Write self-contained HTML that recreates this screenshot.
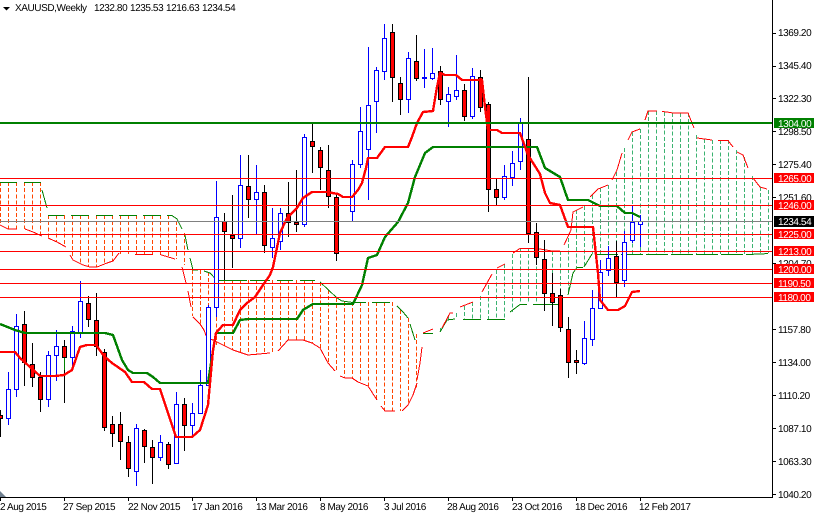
<!DOCTYPE html>
<html><head><meta charset="utf-8"><style>
html,body{margin:0;padding:0;background:#fff;width:814px;height:514px;overflow:hidden}
svg{display:block}
text{font-family:"Liberation Sans",sans-serif;font-size:10px;letter-spacing:-.42px}
</style></head><body>
<svg width="814" height="514" viewBox="0 0 814 514" xmlns="http://www.w3.org/2000/svg" shape-rendering="crispEdges">
<rect width="814" height="514" fill="#fff"/>
<!-- cloud verticals -->
<path fill="none" stroke="#FF4500" stroke-dasharray="4 2.200" d="M.5 182V225M8.5 182V229M16.5 182V229M24.5 182V229M32.5 182V232M40.5 182V236M48.5 215V238M56.5 215V242M64.5 215V246M72.5 215V258M80.5 215V264M88.5 215V267M96.5 215V267M104.5 215V264M112.5 215V261M120.5 215V254M128.5 215V254M136.5 215V254M144.5 215V254M152.5 215V254M160.5 215V254M168.5 215V257M176.5 221V259M184.5 233V265M192.5 270V316M200.5 270V324M208.5 272V340M216.5 280V345M224.5 280V347M232.5 280V350M240.5 280V353M248.5 280V355M256.5 280V355M264.5 280V354M272.5 280V352M280.5 280V349M288.5 280V340M296.5 280V340M304.5 280V340M312.5 280V343M320.5 282V348M328.5 290V363M336.5 298V372M344.5 302V378M352.5 302V378M360.5 302V383M368.5 302V386M376.5 302V399M384.5 302V411M392.5 302V411M400.5 310V411M408.5 318V405M416.5 334V388"/>
<path fill="none" stroke="#3CB371" stroke-dasharray="4 2.200" d="M440.5 328V332M448.5 316V320M456.5 313V319M464.5 306V319M472.5 302V319M480.5 296V319M488.5 285V319M496.5 270V319M504.5 264V319M512.5 254V312M520.5 248V304M528.5 248V304M536.5 248V304M544.5 249V304M552.5 251V304M560.5 251V304M568.5 238V292M576.5 210V267M584.5 206V267M592.5 195V254M600.5 188V254M608.5 185V254M616.5 172V254M624.5 148V254M632.5 132V254M640.5 129V254M648.5 111V254M656.5 111V254M664.5 112V254M672.5 113V254M680.5 113V254M688.5 113V254M696.5 135V254M704.5 139V254M712.5 140V254M720.5 140V254M728.5 140V254M736.5 150V254M744.5 157V254M752.5 176V254M760.5 187V254M768.5 190V253"/>
<!-- cloud edges -->
<path fill="none" stroke="#008000" d="M0 182.5H17M24 182.5H41M42 190L47 208M48 215.5H64M71 215.5H89M96 215.5H113M119 215.5H137M143 215.5H161M167 215.5H172L177 219L182 229M185 235L188 250M190 258L193 270H198M204 271L210 273L217 280.5H247M250 280.5H270M277 280.5H293M300 280.5H315M320 282L337 298L342 301L353 302.5H366M372 302.5H390M397 306L403 312L408 318M410 324L415 340M423 333.5H433M440 332L447 320L455 319M463 319.5H481M487 319.5H505M510 312L520 304.5H527M533 304.5H560M568 295L573 273L577 267.5H583M584 267L592 254"/>
<path fill="none" stroke="#008000" stroke-dasharray="22 3" d="M596 254.5H748L770 253.5"/>
<path fill="none" stroke="#FF0000" d="M0 225L8 229H17M25 229L33 232L42 236M48 238L57 242L66 247M70 255L73 260L83 265L90 267H97L107 263L113 261L119 253M135 254.5H153M160 254.5L175 259M182 267L186 283M188 291L191 307M193 317L200 324L204 330L207 338L213 340L233 350L248 355L270 353M278 351L288 340H303L312 343L320 348L328 363L335 371M340 376L345 378H352L358 382L368 386L377 400M381 406L385 411H395M402 411L408 405L413 395L417 383M417 380L420 363L422 347M423 333L433 329M442 328L450 313L453 313M460 307L473 302M482 292L492 274M497 268L505 264M513 253L520 248.5H537L552 251H560M564 245L571 230L573 212L583 207M590 197L598 189L608 185M612 180L617 170L622 153M628 140L632 132L640 129M645 120L648 111H657M662 111.5L667 112L673 113H688L694 128M697 138L712 140M718 140.5H728L733 147M737 152L743 155L748 168M753 178L760 187L767 189"/>
<!-- candles -->
<path fill="none" stroke="#0000FF" d="M8.5 372V425M16.5 314V397M48.5 351V407M56.5 330V381M72.5 326V367M80.5 281V338M136.5 424V486M160.5 435V461M176.5 392V463M192.5 403V435M200.5 370V413M208.5 305V385M216.5 181V317M240.5 155V248M256.5 165V234M272.5 208V258M280.5 208V250M304.5 134V227M352.5 160V222M360.5 107V168M368.5 47V200M376.5 67V133M384.5 24V80M408.5 52V113M424.5 49V88M432.5 48V80M448.5 87V127M456.5 55V100M472.5 68V119M504.5 165V200M512.5 151V186M520.5 118V170M584.5 321V365M592.5 290V346M600.5 260V308M608.5 246V276M624.5 231V287M632.5 205V243M640.5 215V247"/>
<path fill="#fff" stroke="#0000FF" d="M6.5 389.5h4V418.5h-4zM14.5 326.5h4V389.5h-4zM46.5 355.5h4V399.5h-4zM54.5 346.5h4V355.5h-4zM70.5 331.5h4V357.5h-4zM78.5 301.5h4V332.5h-4zM134.5 428.5h4V471.5h-4zM158.5 442.5h4V457.5h-4zM174.5 404.5h4V463.5h-4zM190.5 413.5h4V425.5h-4zM198.5 385.5h4V413.5h-4zM206.5 307.5h4V385.5h-4zM214.5 217.5h4V307.5h-4zM238.5 185.5h4V238.5h-4zM254.5 192.5h4V199.5h-4zM270.5 238.5h4V247.5h-4zM278.5 213.5h4V241.5h-4zM302.5 137.5h4V224.5h-4zM350.5 164.5h4V211.5h-4zM358.5 131.5h4V164.5h-4zM366.5 105.5h4V149.5h-4zM374.5 70.5h4V101.5h-4zM382.5 38.5h4V71.5h-4zM406.5 58.5h4V99.5h-4zM422.5 77.5h4V78.5h-4zM430.5 73.5h4V78.5h-4zM446.5 94.5h4V101.5h-4zM454.5 90.5h4V96.5h-4zM470.5 76.5h4V116.5h-4zM502.5 176.5h4V197.5h-4zM510.5 163.5h4V177.5h-4zM518.5 123.5h4V161.5h-4zM582.5 338.5h4V363.5h-4zM590.5 308.5h4V339.5h-4zM598.5 272.5h4V308.5h-4zM606.5 258.5h4V270.5h-4zM622.5 242.5h4V280.5h-4zM630.5 222.5h4V240.5h-4zM638.5 221.5h4V224.5h-4z"/>
<path fill="none" stroke="#000" d="M.5 410V437M24.5 311V386M32.5 343V387M40.5 372V412M64.5 340V403M88.5 296V327M96.5 293V356M104.5 349V431M112.5 416V447M120.5 412V460M128.5 436V477M144.5 429V463M152.5 440V484M168.5 442V469M184.5 398V451M224.5 213V280M232.5 195V268M248.5 155V218M264.5 185V253M288.5 182V237M296.5 170V232M312.5 124V173M320.5 147V190M328.5 145V208M336.5 193V261M392.5 24V102M400.5 77V115M416.5 35V81M440.5 66V105M464.5 84V121M480.5 70V112M488.5 102V212M496.5 179V205M528.5 77V243M536.5 223V265M544.5 240V311M552.5 273V326M560.5 289V332M568.5 317V378M576.5 350V374M616.5 241V297"/>
<path fill="#FF0000" stroke="#000" d="M-1.5 415.5h4V418.5h-4zM22.5 324.5h4V362.5h-4zM30.5 364.5h4V377.5h-4zM38.5 377.5h4V399.5h-4zM62.5 346.5h4V357.5h-4zM86.5 303.5h4V319.5h-4zM94.5 320.5h4V346.5h-4zM102.5 352.5h4V427.5h-4zM110.5 424.5h4V433.5h-4zM118.5 424.5h4V441.5h-4zM126.5 442.5h4V468.5h-4zM142.5 430.5h4V446.5h-4zM150.5 447.5h4V457.5h-4zM166.5 444.5h4V464.5h-4zM182.5 404.5h4V425.5h-4zM222.5 221.5h4V231.5h-4zM230.5 235.5h4V238.5h-4zM246.5 186.5h4V199.5h-4zM262.5 192.5h4V245.5h-4zM286.5 213.5h4V222.5h-4zM294.5 222.5h4V224.5h-4zM310.5 141.5h4V146.5h-4zM318.5 150.5h4V167.5h-4zM326.5 170.5h4V196.5h-4zM334.5 197.5h4V253.5h-4zM390.5 32.5h4V77.5h-4zM398.5 83.5h4V99.5h-4zM414.5 61.5h4V78.5h-4zM438.5 71.5h4V99.5h-4zM462.5 90.5h4V116.5h-4zM478.5 77.5h4V107.5h-4zM486.5 104.5h4V189.5h-4zM494.5 189.5h4V197.5h-4zM526.5 139.5h4V233.5h-4zM534.5 232.5h4V257.5h-4zM542.5 259.5h4V293.5h-4zM550.5 293.5h4V302.5h-4zM558.5 295.5h4V327.5h-4zM566.5 329.5h4V362.5h-4zM574.5 360.5h4V362.5h-4zM614.5 256.5h4V282.5h-4z"/>
<path stroke="#008000" d="M64.5 358V370"/>
<!-- kijun -->
<path fill="none" stroke="#008000" stroke-width="2.400" d="M0 324L15 330L25 333H105L113 335L122 360L128 370L133 373H147L153 377L160 383H208L212 357L216 333H233L240 320L248 319H297L303 310L313 304H353L362 285L368 258L377 255L385 237L398 222L408 203L415 177L425 153L433 147H537L545 168L560 177L568 200H588L600 206H617L625 213H632L640 217"/>
<!-- tenkan -->
<path fill="none" stroke="#FF0000" stroke-width="2.400" d="M0 352H15L20 358L40 376H55L64 375L72 370L80 347L87 345H96L104 356L112 363L125 372L132 382H144L152 389H160L176 437H192L200 430L208 405L213 350L216 333L223 325H233L240 310L247 303L255 297L263 285L270 275L273 267L280 233L287 218L297 208L303 198L312 192H327L338 194L343 197H352L358 190L362 183L366 168L368 158H377L385 147H408L412 137L417 123L423 112L433 111L437 87L440 73L445 75H456L462 80H482L485 107L488 130H497L502 133H520L528 155L540 174L545 193L550 203L560 205L568 227H593L596 255L598 273L600 300L608 310H618L625 306L632 292L640 291"/>
<!-- horizontal lines -->
<path stroke="#FF0000" d="M0 178.5H773M0 205.5H773M0 234.5H773M0 251.5H773M0 269.5H773M0 283.5H773M0 297.5H773"/>
<path stroke="#808080" d="M0 221.5H773"/>
<rect x="0" y="122" width="773" height="2" fill="#008000"/>
<!-- axes -->
<path stroke="#000" d="M772.5 0V498M0 497.5H773"/>
<path stroke="#000" d="M773 33.5H776M773 66.5H776M773 98.5H776M773 131.5H776M773 164.5H776M773 197.5H776M773 263.5H776M773 329.5H776M773 362.5H776M773 395.5H776M773 428.5H776M773 461.5H776M773 494.5H776M.5 498V501M64.5 498V501M128.5 498V501M192.5 498V501M256.5 498V501M320.5 498V501M384.5 498V501M448.5 498V501M512.5 498V501M576.5 498V501M640.5 498V501"/>
<path fill="#000" d="M3 7H10L6.500 10.500z" shape-rendering="auto"/>
<path fill="#708090" d="M0 491L6 497H0z" shape-rendering="auto"/>
<g fill="#000" shape-rendering="auto" text-rendering="geometricPrecision">
<text x="15" y="11">XAUUSD,Weekly</text>
<text x="94" y="11">1232.80</text><text x="130" y="11">1235.53</text><text x="166" y="11">1216.63</text><text x="202" y="11">1234.54</text>
<text x="778" y="36">1369.20</text><text x="778" y="69">1345.40</text><text x="778" y="102">1322.30</text><text x="778" y="135">1298.50</text><text x="778" y="168">1275.40</text><text x="778" y="201">1251.60</text><text x="778" y="267">1204.70</text><text x="778" y="333">1157.80</text><text x="778" y="366">1134.00</text><text x="778" y="399">1110.20</text><text x="778" y="432">1087.10</text><text x="778" y="465">1063.30</text><text x="778" y="498">1040.20</text>
<text x="0" y="510">2 Aug 2015</text><text x="63" y="510">27 Sep 2015</text><text x="128" y="510">22 Nov 2015</text><text x="192" y="510">17 Jan 2016</text><text x="256" y="510">13 Mar 2016</text><text x="320" y="510">8 May 2016</text><text x="384" y="510">3 Jul 2016</text><text x="447" y="510">28 Aug 2016</text><text x="512" y="510">23 Oct 2016</text><text x="575" y="510">18 Dec 2016</text><text x="639" y="510">12 Feb 2017</text>
</g>
<!-- price tags -->
<g>
<rect x="774" y="118" width="40" height="10" fill="#008000"/>
<rect x="774" y="173" width="40" height="10" fill="#FF0000"/>
<rect x="774" y="200" width="40" height="10" fill="#FF0000"/>
<rect x="774" y="216" width="40" height="11" fill="#000"/>
<rect x="774" y="229" width="40" height="10" fill="#FF0000"/>
<rect x="774" y="246" width="40" height="10" fill="#FF0000"/>
<rect x="774" y="264" width="40" height="10" fill="#FF0000"/>
<rect x="774" y="278" width="40" height="10" fill="#FF0000"/>
<rect x="774" y="292" width="40" height="10" fill="#FF0000"/>
</g>
<g fill="#fff" shape-rendering="auto" text-rendering="geometricPrecision">
<text x="778" y="127">1304.00</text><text x="778" y="182">1265.00</text><text x="778" y="209">1246.00</text><text x="778" y="225">1234.54</text><text x="778" y="238">1225.00</text><text x="778" y="255">1213.00</text><text x="778" y="273">1200.00</text><text x="778" y="287">1190.50</text><text x="778" y="301">1180.00</text>
</g>
</svg>
</body></html>
